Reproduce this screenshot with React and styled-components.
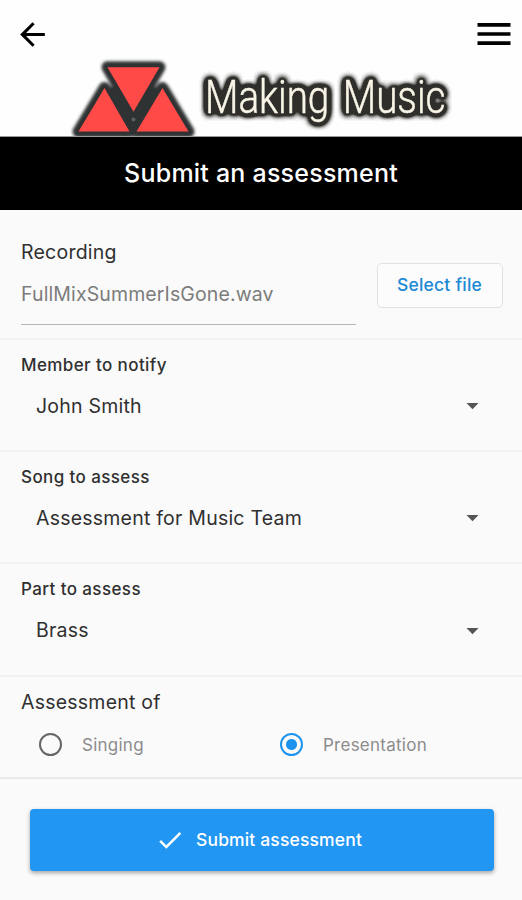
import React, { useState } from 'react';
import styled, { createGlobalStyle } from 'styled-components';
import { MdArrowBack, MdMenu, MdArrowDropDown, MdCheck } from 'react-icons/md';

const selects = [
    { label: 'Member to notify', value: 'John Smith' },
    { label: 'Song to assess', value: 'Assessment for Music Team' },
    { label: 'Part to assess', value: 'Brass' }
];

const Logo = () => (
    <LogoSvg width="522" height="90" viewBox="0 50 522 90">
        <defs>
            <filter id="soft" x="-10%" y="-25%" width="120%" height="150%">
                <feGaussianBlur stdDeviation="1.5" />
            </filter>
            {/* blur the letters, then raise the alpha so the halo is nearly solid */}
            <filter id="halo" x="-20%" y="-30%" width="140%" height="160%" colorInterpolationFilters="sRGB">
                <feGaussianBlur in="SourceAlpha" stdDeviation="3.6" />
                <feComponentTransfer result="spread">
                    <feFuncA type="linear" slope="11" />
                </feComponentTransfer>
                <feFlood floodColor="#2f2e2b" />
                <feComposite in2="spread" operator="in" />
                <feMerge>
                    <feMergeNode />
                    <feMergeNode in="SourceGraphic" />
                </feMerge>
            </filter>
        </defs>
        <g filter="url(#soft)" fill="#2f3332" stroke="#2f3332" strokeWidth="12" strokeLinejoin="round">
            <path d="M107.5 67.3h52l-26 44.5z" />
            <path d="M78.5 131.5h51l-25-43.5z" />
            <path d="M136.5 131.5h52l-26-43.5z" />
            <path d="M104.5 88h58l-10 42h-38z" strokeWidth="2" />
        </g>
        <g fill="#ff4a48">
            <path d="M107.5 67.3h52l-26 44.5z" />
            <path d="M78.5 131.5h51l-25-43.5z" />
            <path d="M136.5 131.5h52l-26-43.5z" />
        </g>
        <circle cx="133.5" cy="119.5" r="2" fill="#5b5f5e" />
        <BrandText x="205" y="112.5" textLength="240.5" lengthAdjust="spacingAndGlyphs" filter="url(#halo)">
            Making Music
        </BrandText>
    </LogoSvg>
);

const App = () => {
    const [kind, setKind] = useState('Presentation');

    return (
        <Page>
            <GlobalStyle />
            <Header>
                <NavBar>
                    <MdArrowBack size={37} />
                    <MdMenu size={44} />
                </NavBar>
                <Logo />
            </Header>
            <Title>Submit an assessment</Title>
            <RecordingRow>
                <FileField>
                    <GroupLabel>Recording</GroupLabel>
                    <FileName>FullMixSummerIsGone.wav</FileName>
                </FileField>
                <SelectButton>Select file</SelectButton>
            </RecordingRow>
            {selects.map(({ label, value }) => (
                <SelectRow key={label}>
                    <FieldLabel>{label}</FieldLabel>
                    <SelectValue>
                        {value}
                        <MdArrowDropDown size={29} color="#555" />
                    </SelectValue>
                </SelectRow>
            ))}
            <KindRow>
                <GroupLabel>Assessment of</GroupLabel>
                <Options>
                    {['Singing', 'Presentation'].map(name => (
                        <Option key={name} onClick={() => setKind(name)}>
                            <Radio $checked={kind === name} />
                            {name}
                        </Option>
                    ))}
                </Options>
            </KindRow>
            <Footer>
                <SubmitButton>
                    <MdCheck size={30} />
                    Submit assessment
                </SubmitButton>
            </Footer>
        </Page>
    );
}

const GlobalStyle = createGlobalStyle`
body {
margin: 0;
background: #fafafa;
}
* {
box-sizing: border-box;
}
`;

const Page = styled.div`
display: flex;
flex-direction: column;
width: 522px;
height: 900px;
overflow: hidden;
background: #fafafa;
color: #303030;
font-family: Inter, 'Liberation Sans', sans-serif;
`;

const Header = styled.header`
display: flex;
flex-direction: column;
height: 137px;
flex-shrink: 0;
overflow: hidden;
background: #fefefe;
border-bottom: 1px solid #9a9a9a;
`;

const NavBar = styled.nav`
display: flex;
align-items: center;
justify-content: space-between;
height: 50px;
padding: 18px 6px 0 14px;
flex-shrink: 0;
color: #000;
`;

const LogoSvg = styled.svg`
display: block;
flex-shrink: 0;
height: 90px;
`;

const BrandText = styled.text`
font-family: Roboto, sans-serif;
font-size: 47px;
font-weight: 300;
word-spacing: 5px;
fill: #f8f4e6;
stroke: #f8f4e6;
stroke-width: 0.5px;
`;

const Title = styled.h1`
display: flex;
align-items: center;
justify-content: center;
height: 72.5px;
margin: 0;
flex-shrink: 0;
background: #000;
color: #fff;
font-size: 25px;
font-weight: 500;
letter-spacing: 0.22px;
`;

const Row = styled.section`
flex-shrink: 0;
border-bottom: 2px solid #f2f2f2;
`;

const RecordingRow = styled(Row)`
display: flex;
align-items: flex-start;
justify-content: space-between;
height: 130px;
padding: 30px 19px 0 21px;
`;

const FileField = styled.div`
width: 335px;
height: 85.5px;
border-bottom: 1.5px solid #b5b5b5;
`;

const GroupLabel = styled.div`
font-size: 19.5px;
line-height: 24px;
letter-spacing: 0.23px;
`;

const FileName = styled.div`
margin-top: 18px;
font-size: 19.5px;
line-height: 24px;
letter-spacing: 0.12px;
color: #7c7c7c;
`;

const SelectButton = styled.button`
width: 126px;
height: 45px;
margin-top: 23px;
padding: 0 1px 1px 0;
border: 1.5px solid #e0e2e4;
border-radius: 5px;
background: #fcfcfc;
color: #2089d6;
font-family: inherit;
font-size: 17.5px;
font-weight: 500;
letter-spacing: 0.2px;
`;

const SelectRow = styled(Row)`
height: 112.4px;
padding: 14px 35px 0 21px;
`;

const FieldLabel = styled.div`
font-size: 17px;
font-weight: 500;
line-height: 22px;
letter-spacing: 0.4px;
`;

const SelectValue = styled.div`
display: flex;
align-items: center;
justify-content: space-between;
height: 30px;
margin-top: 15px;
padding-left: 15px;
font-size: 19.5px;
letter-spacing: 0.22px;
`;

const KindRow = styled(Row)`
height: 102.5px;
padding: 13.5px 21px 0;
border-bottom-color: #e9e9e9;
`;

const Options = styled.div`
display: grid;
grid-template-columns: 241px 1fr;
margin-top: 18px;
padding-left: 18px;
`;

const Option = styled.div`
display: flex;
align-items: center;
gap: 20px;
height: 25px;
color: #8c8c8c;
font-size: 17px;
letter-spacing: 0.25px;
`;

const Radio = styled.span`
width: 23px;
height: 23px;
border: 2.5px solid ${props => props.$checked ? '#1e93ee' : '#666'};
border-radius: 50%;
background: ${props => props.$checked ? 'radial-gradient(circle, #1e93ee 5px, transparent 6px)' : 'none'};
`;

const Footer = styled.footer`
padding: 30px 28px 0 30px;
`;

const SubmitButton = styled.button`
display: flex;
align-items: center;
justify-content: center;
gap: 11px;
width: 464px;
height: 62px;
padding: 0 7px 1px 0;
border: 0;
border-radius: 4px;
background: #2196f3;
box-shadow: 0 2px 4px rgba(0, 0, 0, 0.35);
color: #fff;
font-family: inherit;
font-size: 17.5px;
font-weight: 500;
letter-spacing: 0.15px;
`;

export default App;
